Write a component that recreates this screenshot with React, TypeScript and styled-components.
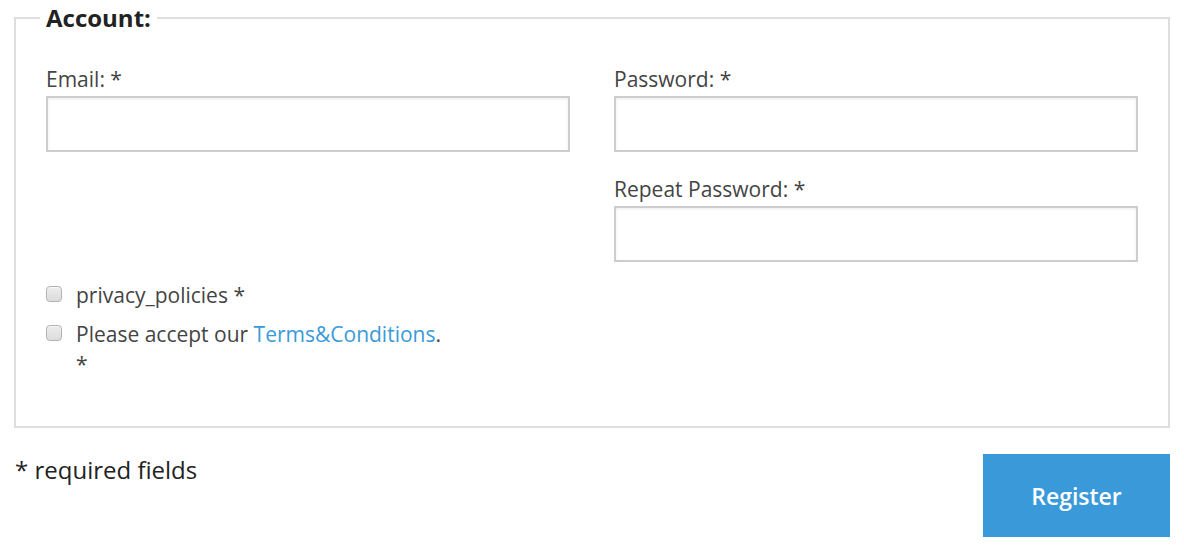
import React, { FC } from "react";
import styled, { createGlobalStyle } from "styled-components";

const GlobalStyle = createGlobalStyle`
  html, body {
    margin: 0;
    padding: 0;
    background: #fff;
  }
  body {
    font-family: "Open Sans", "Liberation Sans", sans-serif;
    color: #444;
  }
  * {
    box-sizing: border-box;
  }
`;

const Page = styled.form`
  width: 1184px;
  padding: 1px 14px 0 14px;
`;

const Fieldset = styled.fieldset`
  margin: 0;
  padding: 0 30px 47px 30px;
  border: 2px solid #dedede;
  min-width: 0;
`;

const Legend = styled.legend`
  margin-left: -6px;
  padding: 0 6px;
  font-size: 24px;
  line-height: 34px;
  font-weight: 700;
  color: #222;
`;

const Grid = styled.div`
  display: grid;
  grid-template-columns: 1fr 1fr;
  column-gap: 44px;
  margin-top: 30px;
`;

const Column = styled.div`
  display: flex;
  flex-direction: column;
  gap: 23px;
`;

const Field = styled.div`
  display: flex;
  flex-direction: column;
`;

const Label = styled.label`
  font-size: 21px;
  line-height: 28px;
  margin-bottom: 3px;
  color: #444;
`;

const Input = styled.input`
  display: block;
  width: 100%;
  height: 56px;
  border: 2px solid #cdcdcd;
  background: #fff;
  box-shadow: inset 0 1px 3px rgba(0, 0, 0, 0.08);
  font: inherit;
  padding: 0 12px;
  outline: none;
`;

const Checks = styled.div`
  display: flex;
  flex-direction: column;
  gap: 9px;
  margin-top: 18px;
`;

const CheckRow = styled.label`
  display: flex;
  align-items: flex-start;
  gap: 14px;
  font-size: 21px;
  line-height: 30px;
  color: #444;
`;

const Box = styled.input`
  appearance: none;
  -webkit-appearance: none;
  flex: 0 0 auto;
  width: 16px;
  height: 16px;
  margin: 6px 0 0 0;
  border: 1px solid #b3b3b3;
  border-radius: 4px;
  background: linear-gradient(#ececec, #dcdcdc);
  box-shadow: inset 0 1px 1px rgba(255, 255, 255, 0.6), 0 0 1px rgba(0, 0, 0, 0.1);
`;

const Required = styled.span<{ $block?: boolean }>`
  display: ${(p) => (p.$block ? "block" : "inline")};
`;

const Link = styled.a`
  color: #3a9ad9;
  text-decoration: none;
`;

const Footer = styled.div`
  display: flex;
  justify-content: space-between;
  align-items: flex-start;
  margin-top: 26px;
`;

const Note = styled.p`
  margin: -1px 0 0 1px;
  font-size: 24px;
  line-height: 34px;
  color: #222;
`;

const Button = styled.button`
  width: 187px;
  height: 83px;
  border: none;
  background: #3a9ad9;
  color: #fff;
  font-family: "Open Sans", "Liberation Sans", sans-serif;
  font-size: 23px;
  font-weight: 600;
  cursor: pointer;
`;

type FieldProps = { id: string; label: string; type?: string };

const TextField: FC<FieldProps> = ({ id, label, type = "text" }) => (
  <Field>
    <Label htmlFor={id}>{label} *</Label>
    <Input id={id} type={type} />
  </Field>
);

export default function App() {
  return (
    <>
      <GlobalStyle />
      <Page onSubmit={(e) => e.preventDefault()}>
        <Fieldset>
          <Legend>Account:</Legend>
          <Grid>
            <Column>
              <TextField id="email" label="Email:" type="email" />
            </Column>
            <Column>
              <TextField id="password" label="Password:" type="password" />
              <TextField id="repeat" label="Repeat Password:" type="password" />
            </Column>
          </Grid>
          <Checks>
            <CheckRow>
              <Box type="checkbox" />
              <span>
                privacy_policies <Required>*</Required>
              </span>
            </CheckRow>
            <CheckRow>
              <Box type="checkbox" />
              <span>
                Please accept our <Link href="#">Terms&amp;Conditions</Link>.
                <Required $block>*</Required>
              </span>
            </CheckRow>
          </Checks>
        </Fieldset>
        <Footer>
          <Note>* required fields</Note>
          <Button type="submit">Register</Button>
        </Footer>
      </Page>
    </>
  );
}
